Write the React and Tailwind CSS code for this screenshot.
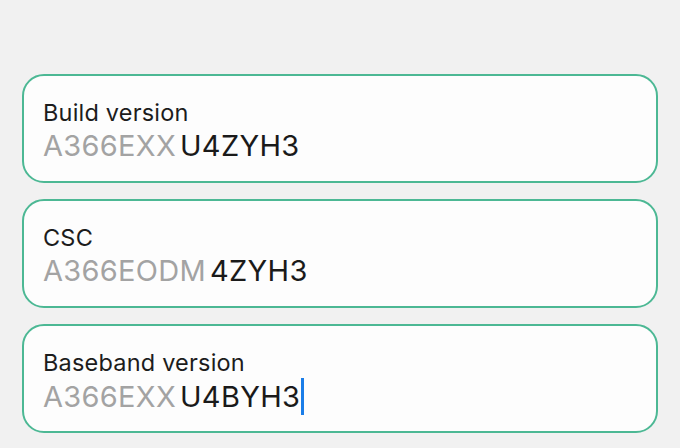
import React from "react";

const rows = [
  { label: "Build version", prefix: "A366EXX", suffix: "U4ZYH3" },
  { label: "CSC", prefix: "A366EODM", suffix: "4ZYH3" },
  { label: "Baseband version", prefix: "A366EXX", suffix: "U4BYH3", focused: true },
];

function InfoField({ label, prefix, suffix, focused }) {
  return (
    <div className="h-[109px] rounded-[22px] border-2 border-[#4cb894] bg-[#fdfdfd] pl-[19px] pt-[22px]">
      <div className="text-[23.5px] leading-[30px] text-[#1c1c1c] tracking-[0.2px]">{label}</div>
      <div className="flex items-center text-[29px] leading-[36px] tracking-[0.3px]">
        <span className="text-[#a3a3a3]">{prefix}</span>
        <span className="ml-[4px] text-[#1a1a1a]">{suffix}</span>
        {focused && <span className="ml-[1px] h-[37px] w-[3px] bg-[#1a7de8]" />}
      </div>
    </div>
  );
}

export default function App() {
  return (
    <div
      className="h-[448px] w-[680px] overflow-hidden bg-[#f1f1f1] px-[22px] pt-[74px] flex flex-col gap-[16px]"
      style={{ fontFamily: "Inter, 'Noto Sans', sans-serif" }}
    >
      {rows.map((r) => (
        <InfoField key={r.label} {...r} />
      ))}
    </div>
  );
}
